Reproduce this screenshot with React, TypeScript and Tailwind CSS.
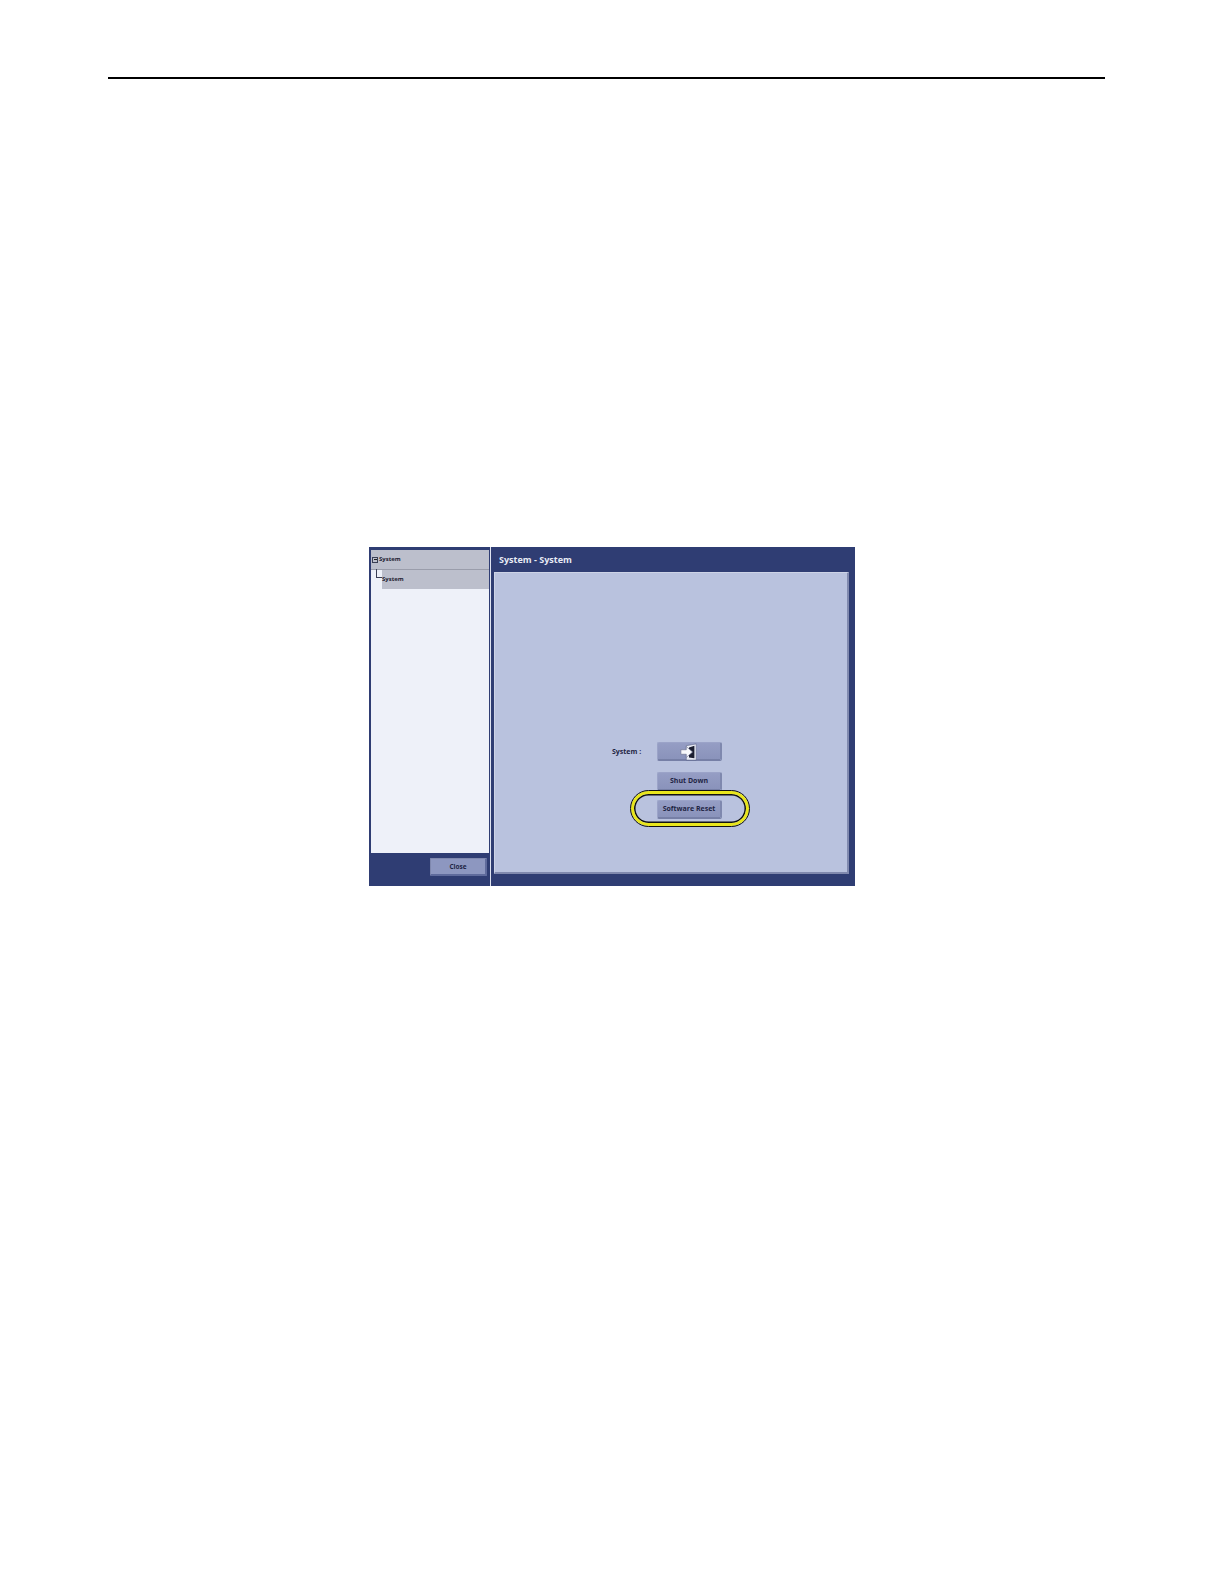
const buttonClass =
  "flex h-[19px] w-[65px] items-center justify-center whitespace-nowrap rounded-[2px] border border-b-2 border-r-2 border-[#9ba3c8] border-b-[#767fa6] border-r-[#7f88ae] bg-gradient-to-b from-[#959dc4] to-[#8a93bb] pt-[1px] text-[7px] font-bold text-[#1f2544]";

export default function App() {
  return (
    <div className="min-h-screen bg-white pt-[77px] font-['Open_Sans',sans-serif]">
      <div className="ml-[108px] h-[2px] w-[997px] bg-black" />

      {/* Screen capture */}
      <div className="ml-[369px] mt-[468px] flex h-[339px] w-[486px] bg-[#2f3d73]">
        <div className="flex w-[121px] flex-col pl-[2px] pr-[1px] pt-[3px]">
          <div className="flex h-[303px] flex-col bg-[#eef1f9]">
            <div className="flex h-[20px] items-center gap-[1px] border-b border-[#9a9dab] bg-[#bcbfcc] pl-[1px]">
              <span className="flex h-[6px] w-[6px] items-center justify-center border border-[#3a3f55]">
                <span className="h-[1px] w-[3px] bg-[#222]" />
              </span>
              <span className="text-[6px] font-bold text-[#1f2333]">System</span>
            </div>
            <div className="relative ml-[11px] flex h-[19px] items-center bg-[#bcbfcc] text-[6px] font-bold text-[#1f2333]">
              <span className="absolute -left-[6px] -top-[1px] h-[9px] w-[6px] border-b border-l border-[#3a3f55]" />
              System
            </div>
          </div>
          <div className="flex flex-1 items-center justify-end pb-[5px] pr-[2px]">
            <button className="flex h-[18px] w-[57px] items-center justify-center rounded-[1px] border border-b-2 border-r-2 border-[#7f88ae] border-b-[#5f6b9c] border-r-[#5f6b9c] bg-[#8d97c0] text-[6.500px] font-bold text-[#1f2544]">
              Close
            </button>
          </div>
        </div>

        <div className="w-[1px] bg-[#dfe3f0]" />

        <div className="flex flex-1 flex-col pl-[3px] pr-[6px]">
          <div className="flex h-[25px] items-center pl-[5px] pt-[1px] text-[9px] font-bold text-[#e8ebf5]">
            System - System
          </div>
          <div className="flex h-[302px] flex-col items-start border-b-2 border-l border-r-2 border-t border-b-[#8089ae] border-l-[#cdd3e6] border-r-[#8089ae] border-t-[#cdd3e6] bg-[#b9c2de] pl-[117px] pt-[169px]">
            <div className="flex items-center">
              <span className="w-[45px] whitespace-nowrap pt-[2px] text-[7px] font-bold text-[#1f2544]">System :</span>
              <button className={buttonClass}>
                <svg viewBox="0 0 20 20" className="h-[18px] w-[18px]">
                  <path d="M7 3l11-2v18H7z" fill="#e8ebf5" stroke="#5a6084" strokeWidth="0.6" />
                  <path d="M10 5l6-2v14l-6-1z" fill="#1b1e30" />
                  <path d="M1 7.500h6V4l7 6-7 6v-3.500H1z" fill="#f8f9fc" stroke="#6a7090" strokeWidth="0.7" />
                </svg>
              </button>
            </div>
            <button className={`ml-[45px] mt-[11px] ${buttonClass}`}>Shut Down</button>
            <div className="relative ml-[45px] mt-[9px] h-[19px] w-[65px]">
              <button className={buttonClass}>Software Reset</button>
              <span className="absolute -bottom-[7px] -left-[26px] -right-[27px] -top-[9px] rounded-full border-[3px] border-[#e8e51c] shadow-[inset_0_0_0_1.500px_#111] outline-[1.500px] outline-[#111]" />
            </div>
          </div>
        </div>
      </div>
    </div>
  );
}
